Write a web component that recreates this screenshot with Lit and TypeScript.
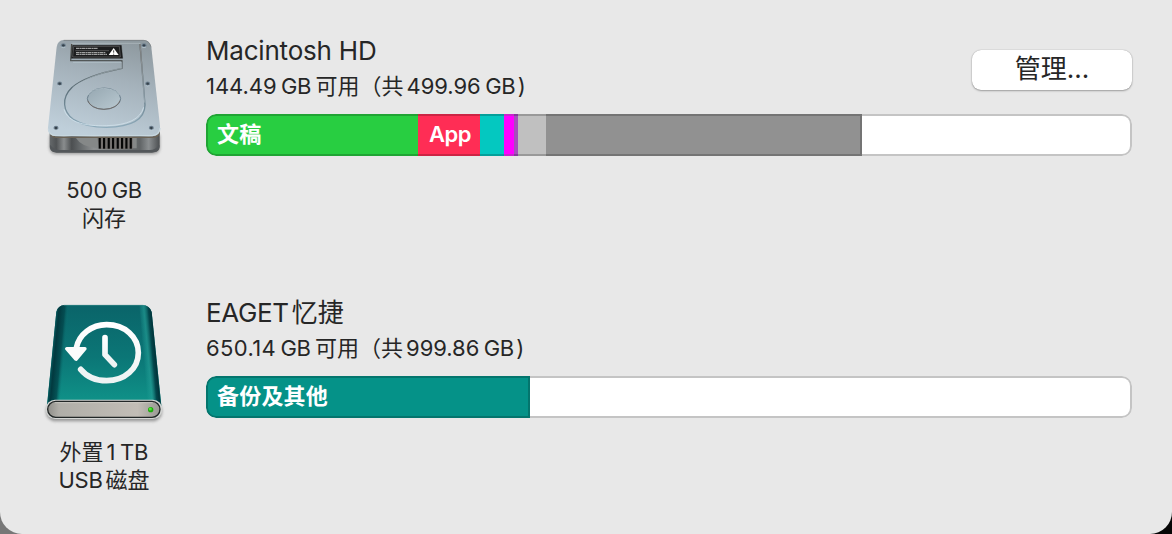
import { LitElement, html, css, svg } from "lit";
import { customElement, property } from "lit/decorators.js";

interface Segment { size: number; fill: string; edge: string; label?: string; }
interface Run { text: string; cls: string; }

@customElement("disk-icon")
class DiskIcon extends LitElement {
  @property() kind = "internal";
  static styles = css`
    :host { display: block; width: 136px; height: 136px; }
    svg { display: block; overflow: visible; }
  `;
  private internal() {
    const screws = [[82, 46], [324, 46], [71, 161], [335, 161], [60, 294], [346, 294]];
    return html`<svg width="136" height="136" viewBox="0 0 408 408">
      <defs>
        <linearGradient id="top" x1="0.7" y1="0" x2="0.4" y2="1">
          <stop offset="0" stop-color="#8e999f"/><stop offset=".4" stop-color="#a4b1ba"/><stop offset="1" stop-color="#bfcfda"/>
        </linearGradient>
        <linearGradient id="disc" x1="0" y1="0" x2="1" y2="1">
          <stop offset="0" stop-color="#96a7b1"/><stop offset="1" stop-color="#b9c9d1"/>
        </linearGradient>
        <linearGradient id="lid" x1="0" y1="0" x2="1" y2="0">
          <stop offset="0" stop-color="#65696b"/><stop offset=".06" stop-color="#505355"/><stop offset=".13" stop-color="#8a8d8e"/>
          <stop offset=".2" stop-color="#4c4f51"/><stop offset=".28" stop-color="#666a6c"/><stop offset=".4" stop-color="#8d9091"/><stop offset=".82" stop-color="#606466"/>
          <stop offset=".9" stop-color="#8b8f91"/><stop offset="1" stop-color="#4b4e50"/>
        </linearGradient>
        <linearGradient id="rim" x1="0" y1="0" x2="0" y2="1">
          <stop offset="0" stop-color="#4b4843"/><stop offset=".6" stop-color="#617681"/><stop offset="1" stop-color="#8eabbb"/>
        </linearGradient>
        <filter id="soft" x="-10%" y="-10%" width="120%" height="125%"><feGaussianBlur stdDeviation="5"/></filter>
      </defs>
      <path d="M41 315H372V352Q372 373 350 373H60Q40 371 40 350Z" fill="#777" opacity=".65" filter="url(#soft)"/>
      <path d="M41 300H371V350Q371 366 352 367H60Q41 366 41 350Z" fill="url(#lid)"/>
      <path d="M42 344Q54 360 72 360H342Q358 360 370 344V352Q368 367 348 368H62Q44 366 42 352Z" fill="#53575a"/>
      <path d="M118 322H302V355H188Q138 354 118 322Z" fill="#858888"/>
      <path d="M184 320H290V357H194Q187 350 184 320Z" fill="#73706e"/>
      ${[188, 201, 215, 228, 242, 255, 268, 281].map(x => svg`<rect x=${x} y="321" width="6.5" height="35" fill="#050606"/>`)}
      <path d="M44 312Q46 321 62 322H348Q368 322 370 308" fill="none" stroke="#6b6356" stroke-width="4"/>
      <path d="M83 30H322Q341 30 346 52L372 288Q375 317 349 318H60Q35 317 36 293L62 51Q65 31 83 30Z" fill="url(#top)"/>
      <path d="M37 296Q39 316 60 317H349Q371 315 372 294" fill="none" stroke="#c7d7df" stroke-width="4"/>
      <path d="M83 31H322Q339 31 345 50" fill="none" stroke="#75797a" stroke-width="2"/>
      <path d="M107 42L104 92H258V115C183 130 132 151 107 173C75 204 81 245 112 268Q151 292 211 292Q326 290 327 225L312 42" fill="none" stroke="url(#rim)" stroke-width="4" stroke-linejoin="round"/>
      <path d="M84 238C96 279 151 289 211 287Q308 285 323 232" fill="none" stroke="#d0e1ea" stroke-width="2.5"/>
      <path d="M107 40H312L326 218" fill="none" stroke="#c0c9ce" stroke-width="1.5"/>
      <path d="M108 94H254V112C183 126 134 148 107 170" fill="none" stroke="#c1d0d8" stroke-width="1.5" transform="translate(3 3)"/>
      <ellipse cx="204" cy="206" rx="50" ry="32" fill="url(#disc)" stroke="#6b7f8d" stroke-width="3"/>
      <path d="M155 196Q167 176 203 175Q241 177 252 196" fill="none" stroke="#bdcbd2" stroke-width="2"/>
      <path d="M155 212Q167 237 203 238Q241 237 252 212" fill="none" stroke="#6e5e54" stroke-width="2"/>
      <path d="M110 46H256L260 85H106Z" fill="#1c1d1e" stroke="#0b0c0d" stroke-width="1"/>
      <path d="M113 49H250L253 81H110Z" fill="none" stroke="#8c8c8c" stroke-width="1.3"/>
      <path d="M120 55H186M120 68H208M120 73H213" stroke="#bbb" stroke-width="3" stroke-dasharray="10 1 6 1"/>
      <path d="M118 62H219" stroke="#888" stroke-width="1.5"/>
      <path d="M233 54L248 75H218Z" fill="#fff"/>
      <path d="M233 61V68M233 71V74" stroke="#222" stroke-width="2.5"/>
      ${screws.map(([x, y]) => svg`<ellipse cx=${x} cy=${y} rx="7.5" ry="6.5" fill="#6f8190"/><ellipse cx=${x} cy=${y} rx="4" ry="3.5" fill="#35414a"/><path d=${`M${x - 6} ${y + 5}q6 4 12 0`} stroke="#c6d4dc" stroke-width="2" fill="none"/>`)}
    </svg>`;
  }
  private backup() {
    return html`<svg width="136" height="136" viewBox="0 -6 408 408">
      <defs>
        <linearGradient id="body" x1="0" y1="0" x2="0" y2="1">
          <stop offset="0" stop-color="#0a6469"/><stop offset=".5" stop-color="#0b7676"/><stop offset="1" stop-color="#10968b"/>
        </linearGradient>
        <linearGradient id="left" gradientUnits="userSpaceOnUse" x1="44" y1="176" x2="86" y2="180">
          <stop offset="0" stop-color="#07666a"/><stop offset=".3" stop-color="#02393f"/><stop offset=".7" stop-color="#03484d" stop-opacity=".85"/><stop offset="1" stop-color="#0b7575" stop-opacity="0"/>
        </linearGradient>
        <linearGradient id="right" gradientUnits="userSpaceOnUse" x1="321" y1="180" x2="364" y2="176">
          <stop offset="0" stop-color="#21a49b" stop-opacity="0"/><stop offset=".35" stop-color="#239c94" stop-opacity=".65"/><stop offset=".65" stop-color="#03484d"/><stop offset=".85" stop-color="#01343a"/><stop offset="1" stop-color="#08686b"/>
        </linearGradient>
        <linearGradient id="face" x1="0" y1="0" x2="1" y2="0">
          <stop offset="0" stop-color="#8f8e89"/><stop offset=".1" stop-color="#b0aea8"/><stop offset=".8" stop-color="#c2bdb6"/><stop offset="1" stop-color="#999993"/>
        </linearGradient>
        <linearGradient id="sign" x1="0" y1="0" x2="0" y2="1"><stop offset="0" stop-color="#fff"/><stop offset="1" stop-color="#edf3f3"/></linearGradient>
        <filter id="shade" x="-10%" y="-20%" width="120%" height="140%"><feGaussianBlur stdDeviation="5"/></filter>
      </defs>
      <rect x="30" y="322" width="348" height="60" rx="28" fill="#555" opacity=".55" filter="url(#shade)"/>
      <path d="M87 33H319Q341 34 347 54L377 345H32L61 54Q65 34 87 33Z" fill="url(#body)"/>
      <path d="M87 33Q65 34 61 54L32 345H72L100 33Z" fill="url(#left)"/>
      <path d="M310 33H319Q341 34 347 54L377 345H334Z" fill="url(#right)"/>
      <path d="M84 34H322" stroke="#37898a" stroke-width="2"/>
      <rect x="29" y="317" width="350" height="58" rx="28" fill="#d3d5d3"/>
      <rect x="35" y="322" width="337" height="48" rx="24" fill="url(#face)" stroke="#222727" stroke-width="4"/>
      <path d="M56 326H350" stroke="#d4d2cd" stroke-width="2"/>
      <circle cx="344" cy="347" r="8" fill="#20a90d"/><circle cx="343" cy="345" r="4.5" fill="#4ee735"/>
      <g fill="none" stroke="url(#sign)" stroke-width="17" stroke-linecap="round" stroke-linejoin="round">
        <path d="M121 162A92 84 0 0 1 212 92C267 92 307 129 307 176C307 224 266 260 212 260C180 260 152 248 134 226"/>
        <path d="M207 131V182L235 212"/>
      </g>
      <path d="M92 164H147L120 196Z" fill="#fafcfc" stroke="#fafcfc" stroke-width="10" stroke-linejoin="round"/>
    </svg>`;
  }
  render() { return this.kind === "internal" ? this.internal() : this.backup(); }
}

@customElement("usage-bar")
class UsageBar extends LitElement {
  @property({ attribute: false }) segments: Segment[] = [];
  static styles = css`
    :host { display: block; }
    .bar { display: flex; height: 42px; width: 926px; box-sizing: border-box; border-radius: 10px; overflow: hidden; }
    .seg { box-sizing: border-box; flex: none; height: 42px; border: solid; border-width: 2px 0; color: #fff;
      font: 700 22px/37px Inter, "Noto Sans CJK SC", sans-serif; white-space: nowrap; padding-left: 11px; }
    .seg.plain { padding: 0; }
    .seg:first-child { border-left-width: 2px; border-radius: 10px 0 0 10px; padding-left: 9px; letter-spacing: .2px; }
    .seg.last { border-right-width: 2px; }
    .app { font-weight: 600; letter-spacing: -.5px; }
    .free { flex: 1; box-sizing: border-box; background: #fff; border: solid #c4c4c4; border-width: 2px 2px 2px 0; border-radius: 0 10px 10px 0; }
  `;
  render() {
    const last = this.segments.length - 1;
    return html`<div class="bar">${this.segments.map((s, i) => html`<div
      class="seg ${s.label ? "" : "plain"} ${i === last ? "last" : ""} ${s.label === "App" ? "app" : ""}"
      style="width:${s.size}px;background:${s.fill};border-color:${s.edge}">${s.label ?? ""}</div>`)}<div class="free"></div></div>`;
  }
}

@customElement("app-root")
class AppRoot extends LitElement {
  static styles = css`
    :host { display: block; width: 1172px; height: 534px; overflow: hidden;
      background: linear-gradient(90deg, #777 0 50%, #060606 50%);
      font-family: Inter, "Noto Sans CJK SC", sans-serif; color: #262626; }
    .window { height: 534px; box-sizing: border-box; padding: 30px 40px 0 36px; background: #e8e8e8; border-radius: 0 0 22px 22px; }
    .disk { display: flex; height: 262px; }
    .side { width: 136px; margin-right: 34px; flex: none; }
    .caption { margin-top: 10px; font-size: 22px; line-height: 28px; text-align: center; white-space: nowrap; }
    .info { width: 926px; }
    .head { display: flex; justify-content: space-between; height: 84px; }
    .title { font-size: 26px; line-height: 36px; height: 36px; margin-top: 3px; white-space: nowrap; }
    .sub { font-size: 22px; line-height: 34px; height: 34px; white-space: nowrap; }
    .name { letter-spacing: -.2px; }
    .brand { letter-spacing: -.35px; margin-right: 3px; }
    .num { letter-spacing: -.05px; margin-right: 4.5px; }
    .wide { letter-spacing: .35px; }
    .unit { letter-spacing: -.4px; margin-right: 4.5px; }
    .usb { letter-spacing: -.3px; margin-right: 3px; }
    .zh { margin-right: 3px; }
    .tight { margin-right: 0; }
    .close { margin-left: -2px; }
    button { width: 160px; height: 40px; margin: 20px 0 0; padding: 0 0 2px; border: 0; border-radius: 9px; background: #fff; color: #262626;
      box-shadow: 0 0 1px rgba(0,0,0,.35), 0 1px 2px rgba(0,0,0,.3); font: 26px/38px Inter, "Noto Sans CJK SC", sans-serif; }
  `;
  private runs(list: Run[]) { return list.map(r => html`<span class=${r.cls}>${r.text}</span>`); }
  private sub(free: string, total: string, spread = "") {
    return this.runs([
      { text: free, cls: `num ${spread}` }, { text: "GB", cls: "unit" }, { text: "可用（共", cls: "zh" },
      { text: total, cls: "num" }, { text: "GB", cls: "unit" }, { text: ")", cls: "close" },
    ]);
  }
  render() {
    const main: Segment[] = [
      { size: 212, fill: "#28ce41", edge: "#20a434", label: "文稿" },
      { size: 62, fill: "#ff2d55", edge: "#cc2444", label: "App" },
      { size: 24, fill: "#04c8c0", edge: "#03a09a" },
      { size: 10, fill: "#ff00ff", edge: "#ca24ce" },
      { size: 4, fill: "#a550bc", edge: "#843b9a" },
      { size: 28, fill: "#c0c0c0", edge: "#999999" },
      { size: 316, fill: "#919191", edge: "#747474" },
    ];
    const backup: Segment[] = [{ size: 324, fill: "#059288", edge: "#04756d", label: "备份及其他" }];
    return html`<div class="window">
      <section class="disk">
        <div class="side"><disk-icon kind="internal"></disk-icon>
          <div class="caption">${this.runs([{ text: "500", cls: "num" }, { text: "GB", cls: "unit tight" }])}<br>闪存</div></div>
        <div class="info"><div class="head"><div>
          <div class="title"><span class="name">Macintosh HD</span></div>
          <div class="sub">${this.sub("144.49", "499.96")}</div></div>
          <button>管理...</button></div>
          <usage-bar .segments=${main}></usage-bar></div>
      </section>
      <section class="disk">
        <div class="side"><disk-icon kind="backup"></disk-icon>
          <div class="caption">${this.runs([{ text: "外置", cls: "zh" }, { text: "1", cls: "num" }, { text: "TB", cls: "tight" }])}<br>${this.runs([{ text: "USB", cls: "usb" }, { text: "磁盘", cls: "tight" }])}</div></div>
        <div class="info"><div class="head"><div>
          <div class="title"><span class="brand">EAGET</span><span>忆捷</span></div>
          <div class="sub">${this.sub("650.14", "999.86", "wide")}</div></div></div>
          <usage-bar .segments=${backup}></usage-bar></div>
      </section>
    </div>`;
  }
}
